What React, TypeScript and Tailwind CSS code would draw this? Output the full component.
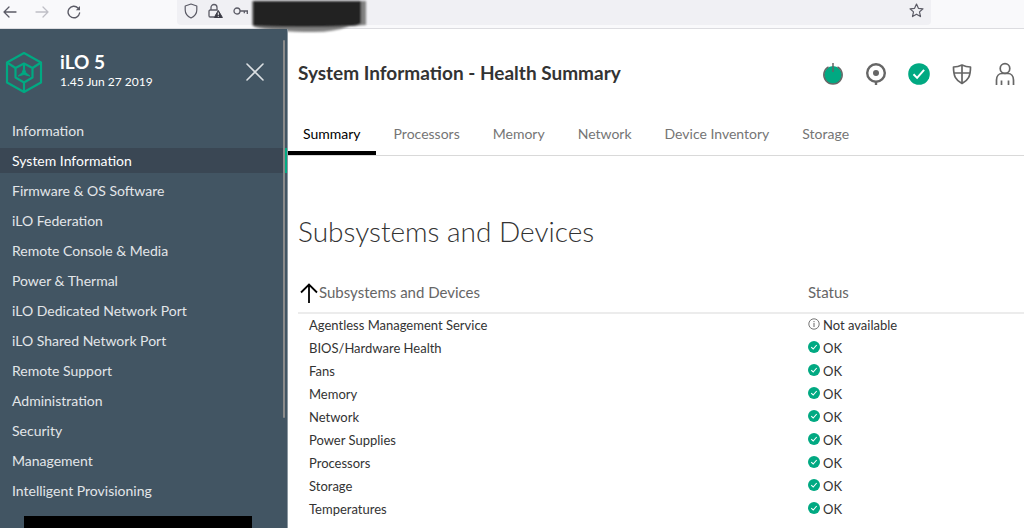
import React from "react";

const navItems = [
  "Information",
  "System Information",
  "Firmware & OS Software",
  "iLO Federation",
  "Remote Console & Media",
  "Power & Thermal",
  "iLO Dedicated Network Port",
  "iLO Shared Network Port",
  "Remote Support",
  "Administration",
  "Security",
  "Management",
  "Intelligent Provisioning",
];

const tabs = ["Summary", "Processors", "Memory", "Network", "Device Inventory", "Storage"];

const subsystems: { name: string; status: string }[] = [
  { name: "Agentless Management Service", status: "Not available" },
  { name: "BIOS/Hardware Health", status: "OK" },
  { name: "Fans", status: "OK" },
  { name: "Memory", status: "OK" },
  { name: "Network", status: "OK" },
  { name: "Power Supplies", status: "OK" },
  { name: "Processors", status: "OK" },
  { name: "Storage", status: "OK" },
  { name: "Temperatures", status: "OK" },
];

function BrowserBar() {
  return (
    <div className="flex h-[29px] shrink-0 items-start border-b border-[#dcdce0] bg-[#f9f9fb] text-[#5b5b66]">
      <div className="flex h-6 w-[177px] shrink-0 items-center gap-[18px] pl-[3px]">
        <button type="button" aria-label="Back">
          <svg width="14" height="14" viewBox="0 0 14 14" fill="none" stroke="currentColor" strokeWidth="1.3" strokeLinecap="round" strokeLinejoin="round">
            <path d="M13 7H1M6 2L1 7l5 5" />
          </svg>
        </button>
        <button type="button" aria-label="Forward" className="text-[#bfbfc6]">
          <svg width="14" height="14" viewBox="0 0 14 14" fill="none" stroke="currentColor" strokeWidth="1.3" strokeLinecap="round" strokeLinejoin="round">
            <path d="M1 7h12M8 2l5 5-5 5" />
          </svg>
        </button>
        <button type="button" aria-label="Reload">
          <svg width="14" height="14" viewBox="0 0 14 14" fill="none" stroke="currentColor" strokeWidth="1.4" strokeLinecap="round">
            <path d="M12.6 8A5.8 5.8 0 1 1 11 2.9l1 1" />
            <path d="M13 1v4.2H8.8z" fill="currentColor" stroke="none" />
          </svg>
        </button>
      </div>
      <div className="relative mr-[93px] flex h-[25px] grow items-center rounded-b bg-[#f0f0f4] pr-[7px] pb-1 pl-[7px]">
        <svg width="14" height="16" viewBox="0 0 14 16" fill="none" stroke="currentColor" strokeWidth="1.2" strokeLinejoin="round">
          <path d="M7 1l5.8 2v4c0 3.500-2.300 6.300-5.800 8C3.500 13.300 1.200 10.500 1.200 7V3z" />
        </svg>
        <svg className="ml-[10px]" width="15" height="16" viewBox="0 0 15 16" fill="none" stroke="currentColor" strokeWidth="1.3">
          <path d="M3 7V4.500a3 3 0 0 1 6 0V7M6 14H2.200A1.200 1.200 0 0 1 1 12.800V8.200A1.200 1.200 0 0 1 2.200 7h7.600" />
          <path d="M10.300 7.500L14.400 14.500H6.200z" fill="#3b3b46" stroke="#3b3b46" strokeWidth="1" strokeLinejoin="round" />
          <path d="M10.300 9.500v2.400M10.300 12.800v1" stroke="#fff" strokeWidth="1" />
        </svg>
        <svg className="ml-[10px]" width="16" height="10" viewBox="0 0 16 10" fill="none" stroke="currentColor" strokeWidth="1.3">
          <circle cx="4" cy="5" r="3" />
          <path d="M7 5h8M14.300 5v3M11.300 5v2.200" />
        </svg>
        <input aria-label="Address" type="text" className="ml-2 min-w-0 grow bg-transparent text-sm outline-none" />
        <button type="button" aria-label="Bookmark this page">
          <svg width="15" height="15" viewBox="0 0 15 15" fill="none" stroke="currentColor" strokeWidth="1.2" strokeLinejoin="round">
            <path d="M7.500 1l1.900 4.300 4.600.5-3.500 3.100 1 4.700-4-2.400-4 2.400 1-4.700L1 5.800l4.600-.5z" />
          </svg>
        </button>
        <svg className="pointer-events-none absolute top-0 left-[73px]" width="120" height="34" viewBox="0 0 120 34">
          <defs>
            <filter id="marker-edge" x="-5%" y="-10%" width="110%" height="120%">
              <feGaussianBlur stdDeviation="0.8" />
            </filter>
          </defs>
          <g filter="url(#marker-edge)">
            <path d="M2 1h114v24l-16 1q-16 6-36 6Q24 32 5 27L2 25z" fill="#808080" />
            <path d="M3 1h108v22q-2 3-12 3-46 2-94 0l-2-1z" fill="#222223" />
          </g>
        </svg>
      </div>
    </div>
  );
}

function Sidebar() {
  return (
    <aside className="relative flex w-72 shrink-0 flex-col border-r border-[#8c98a1] bg-[#425563] text-white">
      <div className="flex h-[89px] items-center pr-[23px] pb-[3px] pl-[5px]">
        <svg width="38" height="43" viewBox="0 0 38 43" fill="none" stroke="#01a982" strokeWidth="2.200" strokeLinejoin="round">
          <path d="M19 2l17 9.500v20L19 41 2 31.500v-20z" />
          <path d="M19 12.500l8.500 4.500v9.500L19 31.500 10.500 26.500V17z" />
          <path d="M2 11.500L10.500 17M36 11.500L27.500 17M19 31.500V41" />
          <path d="M19 13v5" />
          <path d="M19 16.500l1.800 5.300 4 3.200-5.800-1.500L13.200 25l4-3.200z" fill="#01a982" strokeWidth="1" />
        </svg>
        <div className="ml-[17px] grow pb-1">
          <div className="text-[19px] leading-6 font-bold">iLO 5</div>
          <div className="text-xs leading-4">1.45 Jun 27 2019</div>
        </div>
        <button type="button" aria-label="Close menu">
          <svg width="18" height="18" viewBox="0 0 18 18" fill="none" stroke="#dce0e3" strokeWidth="1.6" strokeLinecap="round">
            <path d="M1 1l16 16M17 1L1 17" />
          </svg>
        </button>
      </div>
      <nav className="flex flex-col gap-[5px]">
        {navItems.map((item) =>
          item === "System Information" ? (
            <a key={item} href="#" aria-current="page" className="flex h-[25px] items-center border-r-[3px] border-[#01a982] bg-[#3a4754] pl-3 text-[14px] text-white">
              {item}
            </a>
          ) : (
            <a key={item} href="#" className="flex h-[25px] items-center pl-3 text-[14px] text-[#e3e6e9]">
              {item}
            </a>
          ),
        )}
      </nav>
      <div className="mt-[13px] mr-[35px] ml-6 grow bg-black" />
      <div className="absolute top-[11px] right-[2px] h-[378px] w-[2px] rounded-full bg-[#8b8b8b]" />
    </aside>
  );
}

function HeaderIcons() {
  return (
    <div className="flex items-center gap-[19px] text-[#666]">
      <button type="button" aria-label="Power">
        <svg width="24" height="24" viewBox="0 0 24 24" fill="none" stroke="currentColor" strokeWidth="1.500">
          <circle cx="12" cy="13" r="9" fill="#01a982" stroke="none" />
          <path d="M7.500 4.800a9.200 9.200 0 1 0 9 0" />
          <path d="M12 1v9" />
        </svg>
      </button>
      <button type="button" aria-label="UID indicator">
        <svg width="24" height="24" viewBox="0 0 24 24" fill="none" stroke="currentColor" strokeWidth="2.400">
          <circle cx="12" cy="11" r="8.800" />
          <circle cx="12" cy="11" r="3" fill="currentColor" stroke="none" />
          <path d="M12 20v3" />
        </svg>
      </button>
      <button type="button" aria-label="Health">
        <svg width="24" height="24" viewBox="0 0 24 24" fill="none">
          <circle cx="12" cy="12" r="10.800" fill="#01a982" />
          <path d="M6.500 12.300l3.600 3.600 7-8" stroke="#fff" strokeWidth="2" />
        </svg>
      </button>
      <button type="button" aria-label="Security">
        <svg width="24" height="24" viewBox="0 0 24 24" fill="none" stroke="currentColor" strokeWidth="1.700" strokeLinejoin="round">
          <path d="M12 3q4 2 8.500 2c0 9-2 13-8.500 16.500C5.500 18 3.500 14 3.500 5Q8 5 12 3zM12 3v18.500M3.800 11h16.400" />
        </svg>
      </button>
      <button type="button" aria-label="User">
        <svg width="24" height="24" viewBox="0 0 24 24" fill="none" stroke="currentColor" strokeWidth="1.700">
          <circle cx="12" cy="6.500" r="4.800" />
          <path d="M3.500 23v-5c0-4 2.500-6.500 5.500-6.500h6c3 0 5.500 2.500 5.500 6.500v5M8.500 23v-4.500M15.500 23v-4.500" />
        </svg>
      </button>
    </div>
  );
}

function StatusIcon({ status }: { status: string }) {
  return status === "OK" ? (
    <svg className="mb-[2px]" width="12" height="12" viewBox="0 0 12 12" fill="none">
      <circle cx="6" cy="6" r="6" fill="#01a982" />
      <path d="M3.200 6.200L5.200 8l3.500-4" stroke="#fff" strokeWidth="1.100" />
    </svg>
  ) : (
    <svg className="mb-[2px]" width="12" height="12" viewBox="0 0 12 12" fill="none" stroke="#666">
      <circle cx="6" cy="6" r="5.200" strokeWidth=".9" />
      <path d="M6 5v4M6 3v1.200" />
    </svg>
  );
}

export default function App() {
  return (
    <div className="flex min-h-screen flex-col bg-white font-['Lato',sans-serif] text-[#333]">
      <BrowserBar />
      <div className="flex grow">
        <Sidebar />
        <main className="flex min-w-0 grow flex-col">
          <header className="flex h-[89px] items-center justify-between pr-[7px] pl-[10px]">
            <h1 className="text-[19px] font-bold">System Information - Health Summary</h1>
            <HeaderIcons />
          </header>
          <nav className="flex h-[38px] gap-[3px] border-b border-[#d9d9d9]">
            {tabs.map((tab) => (
              <a
                key={tab}
                href="#"
                className={
                  tab === "Summary"
                    ? "border-b-4 border-black px-[15px] pt-[6px] text-[14px] leading-5 text-black"
                    : "px-[15px] pt-[6px] text-[14px] leading-5 text-[#757575]"
                }
              >
                {tab}
              </a>
            ))}
          </nav>
          <section className="pt-[55px] pl-[10px]">
            <h2 className="text-[28px] leading-10 font-light">Subsystems and Devices</h2>
            <table className="mt-[22px] w-full table-fixed border-collapse text-left">
              <thead>
                <tr className="h-10 border-b-2 border-[#ececec] text-[15px] text-[#666]">
                  <th scope="col" className="w-[510px] p-0 font-normal">
                    <button type="button" className="flex items-center">
                      <svg className="ml-[2px]" width="19" height="20" viewBox="0 0 19 20" fill="none" stroke="#000" strokeWidth="1.800">
                        <path d="M9 20V2M1 9.500L9 1.500l8 8" />
                      </svg>
                      Subsystems and Devices
                    </button>
                  </th>
                  <th scope="col" className="p-0 font-normal">Status</th>
                </tr>
              </thead>
              <tbody>
                {subsystems.map((row) => (
                  <tr key={row.name} className="h-[23px] text-[13px] leading-5">
                    <td className="p-0 pl-[11px]">{row.name}</td>
                    <td className="p-0">
                      <span className="flex items-center gap-[3px]">
                        <StatusIcon status={row.status} />
                        {row.status}
                      </span>
                    </td>
                  </tr>
                ))}
              </tbody>
            </table>
          </section>
        </main>
      </div>
    </div>
  );
}
